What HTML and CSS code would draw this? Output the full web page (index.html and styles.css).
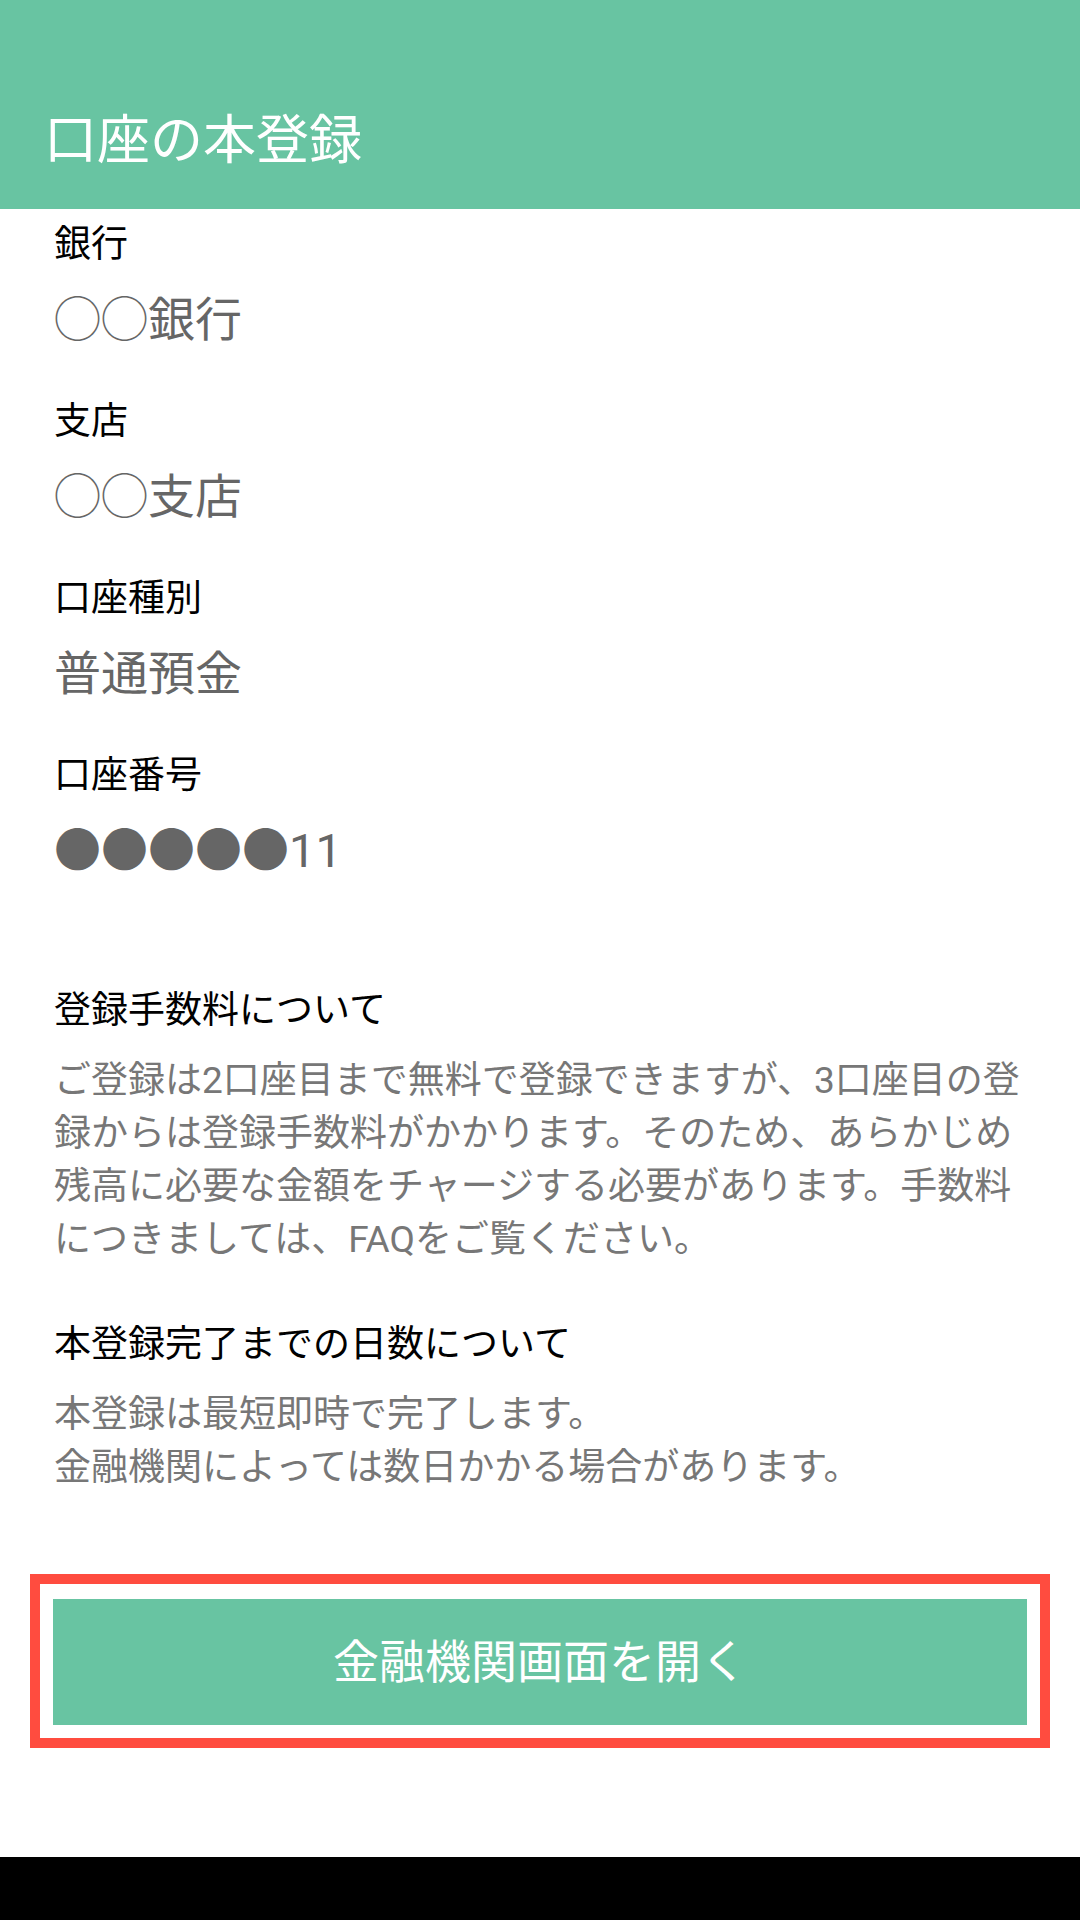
FILE: index.html
```html
<!DOCTYPE html>
<html lang="ja">
<head>
<meta charset="utf-8">
<title>口座の本登録</title>
<link rel="stylesheet" href="styles.css">
</head>
<body>
<div class="screen">
  <header class="app-bar">
    <h1 class="app-title">口座の本登録</h1>
  </header>
  <main class="content">
    <section class="field">
      <div class="field-label">銀行</div>
      <div class="field-value">◯◯銀行</div>
    </section>
    <section class="field">
      <div class="field-label">支店</div>
      <div class="field-value">◯◯支店</div>
    </section>
    <section class="field">
      <div class="field-label">口座種別</div>
      <div class="field-value">普通預金</div>
    </section>
    <section class="field">
      <div class="field-label">口座番号</div>
      <div class="field-value">●●●●●11</div>
    </section>

    <section class="note note-first">
      <h2 class="note-title">登録手数料について</h2>
      <p class="note-body">ご登録は2口座目まで無料で登録できますが、3口座目の登録からは登録手数料がかかります。そのため、あらかじめ残高に必要な金額をチャージする必要があります。手数料につきましては、FAQをご覧ください。</p>
    </section>
    <section class="note">
      <h2 class="note-title">本登録完了までの日数について</h2>
      <p class="note-body">本登録は最短即時で完了します。<br>金融機関によっては数日かかる場合があります。</p>
    </section>

    <div class="highlight">
      <button class="primary-button" type="button">金融機関画面を開く</button>
    </div>
  </main>
  <div class="nav-bar"></div>
</div>
</body>
</html>
```

FILE: styles.css
```css
* {
  box-sizing: border-box;
}

html, body {
  margin: 0;
  padding: 0;
  background: #ffffff;
}

body {
  font-family: "Roboto", "Noto Sans CJK JP", sans-serif;
  color: #000000;
}

.screen {
  width: 1080px;
  height: 1920px;
  display: flex;
  flex-direction: column;
  background: #ffffff;
}

.app-bar {
  height: 209px;
  flex: 0 0 209px;
  background: #68c4a2;
  padding: 115px 44px 0 44px;
}

.app-title {
  margin: 0;
  font-size: 53px;
  line-height: 53px;
  font-weight: 400;
  color: #ffffff;
}

.content {
  flex: 1;
  display: flex;
  flex-direction: column;
  padding: 10px 0 0 0;
}

.field {
  padding: 0 54px;
  margin-bottom: 44px;
}

.field-label {
  font-size: 37px;
  line-height: 52px;
  color: #000000;
}

.field-value {
  margin-top: 17px;
  font-size: 47px;
  line-height: 64px;
  color: #666666;
}

.note {
  padding: 0 54px;
  margin-top: 52px;
}

.note-first {
  margin-top: 57px;
}

.note-title {
  margin: 0;
  font-size: 37px;
  line-height: 53px;
  font-weight: 400;
  color: #000000;
}

.note-body {
  margin: 17px 0 0 0;
  font-size: 37px;
  line-height: 53px;
  color: #777777;
  line-break: strict;
}

.highlight {
  margin: 80px 30px 0 30px;
  border: 10px solid #ff4c3f;
  padding: 15px 13px 13px 13px;
  background: #ffffff;
}

.primary-button {
  display: block;
  width: 100%;
  height: 126px;
  border: none;
  margin: 0;
  padding: 0;
  background: #68c4a2;
  color: #ffffff;
  font-family: "Roboto", "Noto Sans CJK JP", sans-serif;
  font-size: 46px;
  font-weight: 400;
  line-height: 126px;
  text-align: center;
}

.nav-bar {
  height: 63px;
  flex: 0 0 63px;
  background: #000000;
}
```
